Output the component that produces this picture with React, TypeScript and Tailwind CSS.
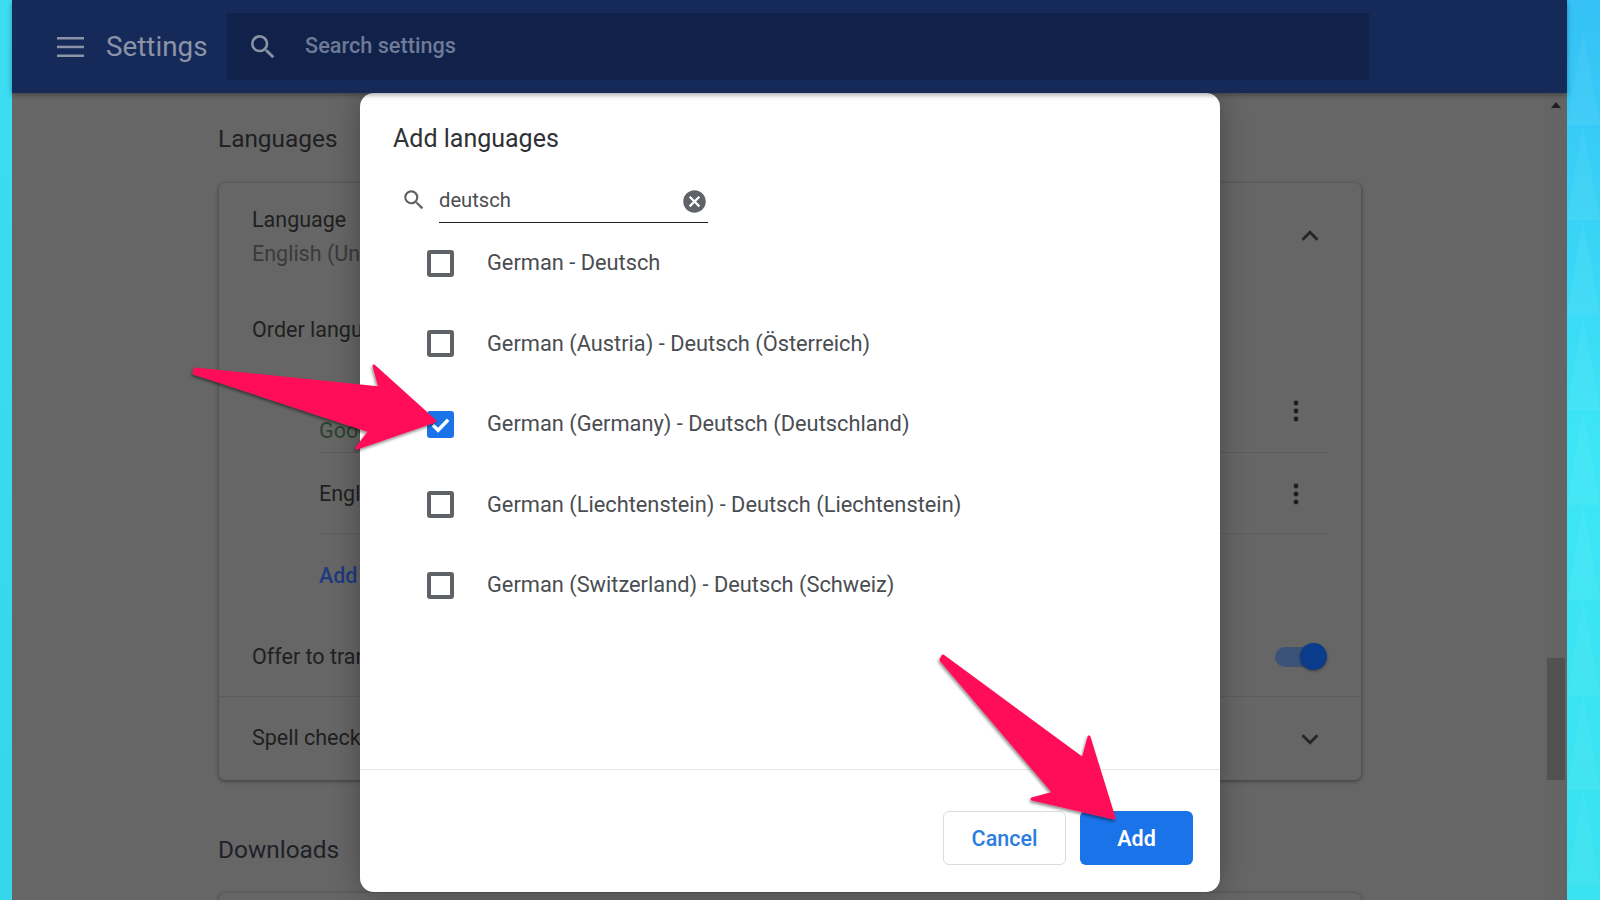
const SEARCH_PATH =
  "M15.5 14h-.79l-.28-.27A6.471 6.471 0 0 0 16 9.5 6.5 6.5 0 1 0 9.5 16c1.61 0 3.09-.59 4.23-1.57l.27.28v.79l5 4.99L20.49 19l-4.99-5zm-6 0C7.01 14 5 11.99 5 9.5S7.01 5 9.5 5 14 7.01 14 9.5 11.99 14 9.5 14z";
const CLEAR_PATH =
  "M12 2C6.47 2 2 6.47 2 12s4.47 10 10 10 10-4.47 10-10S17.53 2 12 2zm5 13.59L15.59 17 12 13.41 8.41 17 7 15.59 10.59 12 7 8.41 8.41 7 12 10.59 15.59 7 17 8.41 13.41 12 17 15.59z";

const languages = [
  { label: "German - Deutsch", checked: false },
  { label: "German (Austria) - Deutsch (Österreich)", checked: false },
  { label: "German (Germany) - Deutsch (Deutschland)", checked: true },
  { label: "German (Liechtenstein) - Deutsch (Liechtenstein)", checked: false },
  { label: "German (Switzerland) - Deutsch (Schweiz)", checked: false },
];

function Icon({ d, className }: { d: string; className: string }) {
  return (
    <svg viewBox="0 0 24 24" fill="currentColor" className={className}>
      <path d={d} />
    </svg>
  );
}

function Kebab() {
  return (
    <svg viewBox="0 0 8 24" fill="#1f1f1f" className="w-[8px] h-[24px]">
      <circle cx="4" cy="4" r="2.4" />
      <circle cx="4" cy="12" r="2.4" />
      <circle cx="4" cy="20" r="2.4" />
    </svg>
  );
}

function Chevron({ up }: { up: boolean }) {
  return (
    <svg viewBox="0 0 24 24" fill="#262626" className="w-[34px] h-[34px]">
      <path d={up ? "M12 8l-6 6 1.41 1.41L12 10.83l4.59 4.58L18 14z" : "M16.59 8.59L12 13.17 7.41 8.59 6 10l6 6 6-6z"} />
    </svg>
  );
}

function Checkbox({ checked }: { checked: boolean }) {
  if (checked) {
    return (
      <div className="w-[27px] h-[27px] rounded-[3px] bg-[#1a73e8] flex items-center justify-center shrink-0">
        <svg viewBox="0 0 24 24" fill="none" stroke="white" strokeWidth="3.6" className="w-[23px] h-[23px]">
          <path d="M4 12.5l5.5 5.5L20 7" />
        </svg>
      </div>
    );
  }
  return <div className="w-[27px] h-[27px] rounded-[3px] border-[4px] border-[#5f6368] shrink-0" />;
}

function Dialog() {
  return (
    <div className="absolute left-[348px] top-0 w-[860px] h-[799px] bg-white rounded-[14px] flex flex-col shadow-[0_0_30px_rgba(0,0,0,0.3)]">
      <div className="h-[676px] flex flex-col">
        <h2 className="pl-[33px] pt-[29px] text-[25px] leading-[34px] text-[#303134]">Add languages</h2>
        <div className="flex items-center pl-[41px] mt-[24px] h-[40px]">
          <Icon d={SEARCH_PATH} className="w-[26px] h-[26px] text-[#5f6368] shrink-0" />
          <div className="ml-[12px] w-[269px] h-[40px] flex items-center justify-between border-b-[1.5px] border-[#202124] mt-[5px]">
            <span className="text-[20.2px] text-[#4a4d51] -mt-[3px]">deutsch</span>
            <Icon d={CLEAR_PATH} className="w-[27px] h-[27px] text-[#5f6368] mr-0 -mt-[2px]" />
          </div>
        </div>
        <ul className="pl-[67px] mt-[3px]">
          {languages.map((lang) => (
            <li key={lang.label} className="h-[80.5px] flex items-center gap-[33px]">
              <Checkbox checked={lang.checked} />
              <span className="text-[21.8px] text-[#4a4d51] pt-[1px]">{lang.label}</span>
            </li>
          ))}
        </ul>
      </div>
      <div className="border-t-[1.5px] border-[#e6e6e6] flex-1 flex justify-end items-start pt-[41px] pr-[27px] gap-[14px]">
        <button className="w-[123px] h-[54px] pt-[3px] rounded-[6px] border border-[#dadce0] bg-white text-[#2b7de0] text-[21.5px] font-medium">
          Cancel
        </button>
        <button className="w-[113px] h-[54px] pt-[3px] rounded-[6px] bg-[#1a73e8] text-white text-[21.5px] font-semibold">
          Add
        </button>
      </div>
    </div>
  );
}

function SettingsCard() {
  return (
    <div className="w-[1142px] h-[597px] rounded-[6px] bg-[#666666] shadow-[0_1px_4px_rgba(0,0,0,0.45)] text-[21.5px] text-[#202020] flex flex-col">
      <div className="h-[100px] pl-[33px] pr-[34px] pt-[20px] flex justify-between">
        <div className="leading-[33.5px]">
          <div>Language</div>
          <div className="text-[#3a3a3a]">English (United States)</div>
        </div>
        <div className="mt-[16px]">
          <Chevron up />
        </div>
      </div>
      <div className="h-[94px] pl-[33px] pt-[30px] leading-[33px]">Order languages</div>
      <div className="ml-[100px] mr-[32px] flex flex-col">
        <div className="h-[76px] border-b border-[#5c5c5c] flex items-center justify-between pr-[29px]">
          <div className="leading-[35px] -mt-[3px]">
            <div>German</div>
            <div className="text-[#2c4131]">Google Chrome</div>
          </div>
          <div className="-mt-[7px]">
            <Kebab />
          </div>
        </div>
        <div className="h-[81px] border-b border-[#5c5c5c] flex items-center justify-between pr-[29px]">
          <span className="mt-[2px]">English</span>
          <div className="mt-[2px]">
            <Kebab />
          </div>
        </div>
        <div className="h-[82px] flex items-center text-[#1f3a80] font-medium pt-[3px]">Add languages</div>
      </div>
      <div className="h-[81px] border-b border-[#5c5c5c] pl-[33px] pr-[35px] flex items-center justify-between">
        <span className="mt-[2px]">Offer to translate pages that aren't in a language you read</span>
        <div className="relative w-[51px] h-[20px] rounded-full bg-[#3c5378] mt-[1px]">
          <div className="absolute -top-[4px] -right-[1px] w-[27px] h-[27px] rounded-full bg-[#0b3c8c] shadow-[0_1px_3px_rgba(0,0,0,0.4)]" />
        </div>
      </div>
      <div className="flex-1 pl-[33px] pr-[34px] flex items-center justify-between">
        <span>Spell check</span>
        <Chevron up={false} />
      </div>
    </div>
  );
}

export default function App() {
  return (
    <div className="relative h-screen w-full overflow-hidden flex font-['Roboto',sans-serif]">
      <div className="w-[12px] shrink-0 bg-gradient-to-b from-[#3cdcf2] to-[#36d6ea]" />

      <div className="relative flex-1 min-w-0 flex flex-col bg-[#666666]">
        <header className="h-[93px] shrink-0 bg-[#162a5a] flex items-center pl-[45px] pr-[198px] shadow-[0_2px_5px_rgba(0,0,0,0.35)] z-10">
          <svg viewBox="0 0 27 20" fill="#8b93a7" className="w-[27px] h-[20px] shrink-0">
            <rect y="0" width="27" height="2.5" />
            <rect y="8.7" width="27" height="2.5" />
            <rect y="17.5" width="27" height="2.5" />
          </svg>
          <span className="ml-[22px] w-[121px] text-[27.8px] text-[#8b93a7]">Settings</span>
          <div className="flex-1 h-[67px] bg-[#10214a] flex items-center pl-[20px]">
            <Icon d={SEARCH_PATH} className="w-[32px] h-[32px] text-[#8b93a7]" />
            <span className="ml-[26px] text-[21.7px] font-medium text-[#6e7a96]">Search settings</span>
          </div>
        </header>

        <main className="relative flex-1 flex min-h-0">
          <div className="flex-1 pl-[207px] overflow-hidden">
            <h2 className="pt-[29px] -ml-[1px] text-[24.4px] leading-[34px] text-[#1f1f22]">Languages</h2>
            <div className="mt-[27px]">
              <SettingsCard />
            </div>
            <h2 className="mt-[53px] -ml-[1px] text-[24.4px] leading-[34px] text-[#1f2128]">Downloads</h2>
            <div className="mt-[26px] w-[1142px] h-[100px] rounded-[6px] bg-[#666666] shadow-[0_1px_4px_rgba(0,0,0,0.45)]" />
          </div>

          <div className="w-[22px] shrink-0 bg-[#646464] flex flex-col items-center">
            <svg viewBox="0 0 10 6" fill="#1f1f1f" className="w-[10px] h-[6px] mt-[9px]">
              <polygon points="0,6 5,0 10,6" />
            </svg>
            <div className="w-[18px] h-[122px] mt-[550px] bg-[#515151]" />
          </div>

          <Dialog />
        </main>
      </div>

      {/* wallpaper strip with faint triangles */}
      <div className="w-[33px] shrink-0 bg-gradient-to-b from-[#35c1f6] via-[#3ce6f6] to-[#38e2f0]">
        <svg className="w-[33px] h-[900px]" viewBox="0 0 33 900" fill="#ffffff" fillOpacity="0.05">
          {[30, 125, 220, 315, 410, 505, 600, 695, 790].map((y) => (
            <polygon key={y} points={`0,${y + 95} 16,${y} 33,${y + 95}`} />
          ))}
        </svg>
      </div>

      {/* annotation arrows */}
      <svg className="absolute left-0 top-0 w-[1600px] h-[900px] pointer-events-none" viewBox="0 0 1600 900">
        <defs>
          <filter id="arrowShadow" x="-20%" y="-20%" width="140%" height="140%">
            <feDropShadow dx="-1" dy="2" stdDeviation="1.5" floodColor="#000000" floodOpacity="0.45" />
          </filter>
        </defs>
        <g fill="#ff1158" stroke="#ff1158" strokeLinejoin="round" filter="url(#arrowShadow)" transform="translate(2 1)">
          <path d="M193 368 L378 387 L372 365 L433 420 L355 447 L368 430 L192 372 Z" strokeWidth="3" />
          <path d="M941 655 L1081 758 L1087 736 L1112 817 L1030 798 L1052 792 L939 659 Z" strokeWidth="3" />
        </g>
      </svg>
    </div>
  );
}
